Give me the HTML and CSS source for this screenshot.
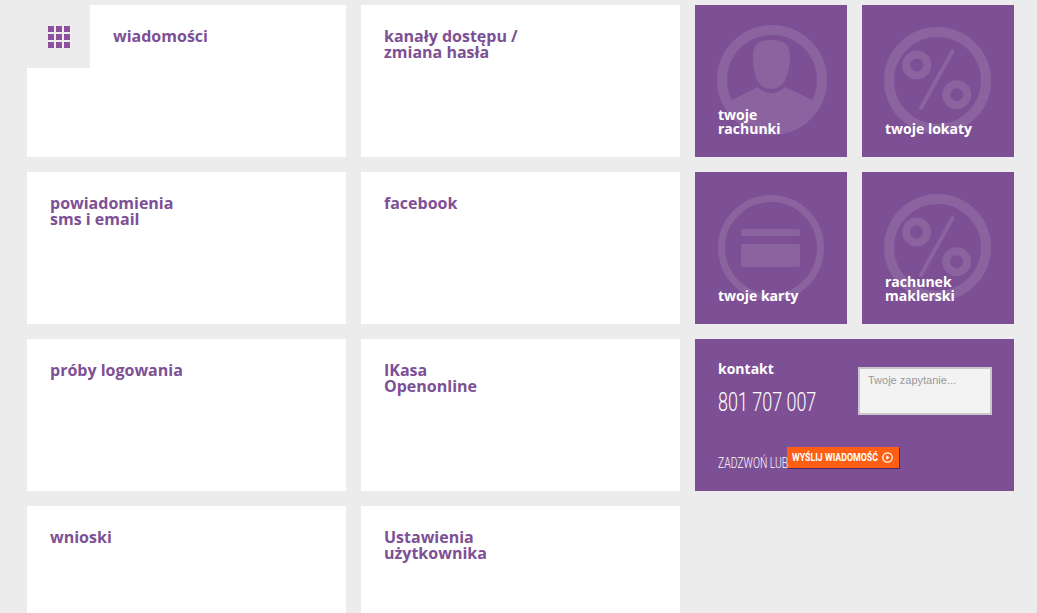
FILE: index.html
```html
<!DOCTYPE html>
<html lang="pl">
<head>
<meta charset="utf-8">
<title>Pulpit</title>
<link rel="stylesheet" href="styles.css">
</head>
<body>
<main class="grid">
  <a class="tile tile-first">
    <span class="menu-btn">
      <svg width="22" height="22" viewBox="0 0 22 22" fill="#8e4f9f"><rect x="0" y="0" width="6" height="6"/><rect x="8" y="0" width="6" height="6"/><rect x="16" y="0" width="6" height="6"/><rect x="0" y="8" width="6" height="6"/><rect x="8" y="8" width="6" height="6"/><rect x="16" y="8" width="6" height="6"/><rect x="0" y="16" width="6" height="6"/><rect x="8" y="16" width="6" height="6"/><rect x="16" y="16" width="6" height="6"/></svg>
    </span>
    <span class="label">wiadomości</span>
  </a>
  <a class="tile"><span class="label">kanały dostępu /<br>zmiana hasła</span></a>
  <a class="small">
    <svg class="bg" viewBox="0 0 152 152" fill="#8a639f"><circle cx="77" cy="75" r="50" fill="none" stroke="#8a639f" stroke-width="10"/><path d="M76 35c-12 0-18 4-18 16 0 12 2 22 6 27 3 4 8 6 12 6s9-2 12-6c4-5 7-15 7-27 0-12-7-16-19-16z"/><path d="M35 96l28-14c3 4 8 6 13 6s10-2 14-6l30 14a48 48 0 0 1-85 0z"/></svg>
    <span class="small-label">twoje<br>rachunki</span>
  </a>
  <a class="small">
    <svg class="bg" viewBox="0 0 152 152"><use href="#pct"/></svg>
    <span class="small-label">twoje lokaty</span>
  </a>

  <a class="tile"><span class="label">powiadomienia<br>sms i email</span></a>
  <a class="tile"><span class="label">facebook</span></a>
  <a class="small">
    <svg class="bg" viewBox="0 0 152 152" fill="#8a639f"><circle cx="76" cy="76" r="49.5" fill="none" stroke="#8a639f" stroke-width="7"/><rect x="46" y="57" width="59" height="7" rx="2"/><rect x="46" y="72" width="59" height="23" rx="2"/></svg>
    <span class="small-label">twoje karty</span>
  </a>
  <a class="small">
    <svg class="bg" viewBox="0 0 152 152"><use href="#pct"/></svg>
    <span class="small-label">rachunek<br>maklerski</span>
  </a>

  <a class="tile"><span class="label">próby logowania</span></a>
  <a class="tile"><span class="label">IKasa<br>Openonline</span></a>
  <section class="contact">
    <div class="contact-main">
      <div class="contact-info">
        <h2 class="contact-title">kontakt</h2>
        <p class="phone"><span class="narrow-phone">801 707 007</span></p>
      </div>
      <div class="query">Twoje zapytanie...</div>
    </div>
    <div class="contact-action">
      <span class="call"><span class="narrow-call">ZADZWOŃ LUB</span></span>
      <a class="send"><span class="send-text"><span class="narrow-send">WYŚLIJ WIADOMOŚĆ</span></span>
        <svg width="11" height="11" viewBox="0 0 11 11"><circle cx="5.5" cy="5.5" r="4.7" fill="none" stroke="#fff" stroke-width="1.2"/><path d="M4.3 3.3l3.2 2.2-3.2 2.2z" fill="#fff"/></svg>
      </a>
    </div>
  </section>

  <a class="tile"><span class="label">wnioski</span></a>
  <a class="tile"><span class="label">Ustawienia<br>użytkownika</span></a>
</main>
<svg class="defs" width="0" height="0" aria-hidden="true">
  <defs>
    <g id="pct" fill="none" stroke="#8a639f">
      <circle cx="75.5" cy="75.5" r="48.5" stroke-width="10"/>
      <circle cx="54.7" cy="60" r="10.5" stroke-width="8"/>
      <circle cx="94.7" cy="89.7" r="10.5" stroke-width="8"/>
      <path d="M90.5 46 59 103" stroke-width="4" stroke-linecap="round"/>
    </g>
  </defs>
</svg>
</body>
</html>
```
FILE: styles.css
```css
* { box-sizing: border-box; }
html, body { margin: 0; height: 613px; overflow: hidden; background: #ececec; }
body { font-family: "Open Sans", sans-serif; }
.grid {
  display: grid;
  grid-template-columns: 319px 319px 152px 152px;
  grid-auto-rows: 152px;
  gap: 15px;
  padding: 5px 0 0 27px;
}
.tile {
  display: flex;
  align-items: flex-start;
  background: #fff;
  padding: 23px;
}
.label {
  font-size: 16px;
  font-weight: 700;
  line-height: 16px;
  color: #7d5095;
}
.tile-first { padding: 0; }
.tile-first .label { margin: 23px 0 0 23px; }
.menu-btn {
  width: 63px;
  height: 63px;
  background: #ececec;
  display: flex;
  align-items: center;
  justify-content: center;
}
.small {
  position: relative;
  display: flex;
  align-items: flex-end;
  background: #7d5095;
  padding: 0 23px 21px;
}
.bg { position: absolute; left: 0; top: 0; width: 152px; height: 152px; }
.small-label {
  position: relative;
  font-size: 14px;
  font-weight: 700;
  line-height: 14px;
  color: #fff;
}
.contact {
  grid-column: span 2;
  background: #7d5095;
  padding: 22px 22px 0 23px;
  color: #fff;
}
.contact-main { display: flex; justify-content: space-between; align-items: flex-start; }
.contact-title { margin: 0; font-size: 14px; font-weight: 700; line-height: 16px; }
.phone {
  margin: 10px 0 0;
  width: 99px;
  font-family: Roboto, sans-serif;
  font-weight: 300;
  font-size: 26px;
  line-height: 30px;
  white-space: nowrap;
}
.narrow-phone { display: inline-block; transform: scaleX(0.69); transform-origin: left center; }
.query {
  width: 134px;
  height: 48px;
  margin-top: 6px;
  padding: 5px 8px;
  background: #f3f3f3;
  border: 2px solid #c9c6cc;
  font-family: "Liberation Sans", sans-serif;
  font-size: 11px;
  line-height: 13px;
  color: #999;
}
.contact-action { display: flex; align-items: flex-start; margin-top: 30px; gap: 3px; }
.call {
  width: 66px;
  font-family: Roboto, sans-serif;
  font-weight: 300;
  font-size: 14px;
  line-height: 16px;
  margin-top: 8px;
  white-space: nowrap;
}
.narrow-call { display: inline-block; transform: scaleX(0.74); transform-origin: left center; }
.send {
  display: flex;
  align-items: center;
  gap: 4px;
  height: 21px;
  width: 112px;
  padding-left: 5px;
  background: #ff5f15;
  box-shadow: 1px 1px 0 #4a2a5f;
  font-family: Roboto, sans-serif;
  font-size: 11px;
  font-weight: 700;
  white-space: nowrap;
}
.send-text { width: 86px; }
.narrow-send { display: inline-block; transform: scaleX(0.8); transform-origin: left center; }
.defs { position: absolute; }
```
